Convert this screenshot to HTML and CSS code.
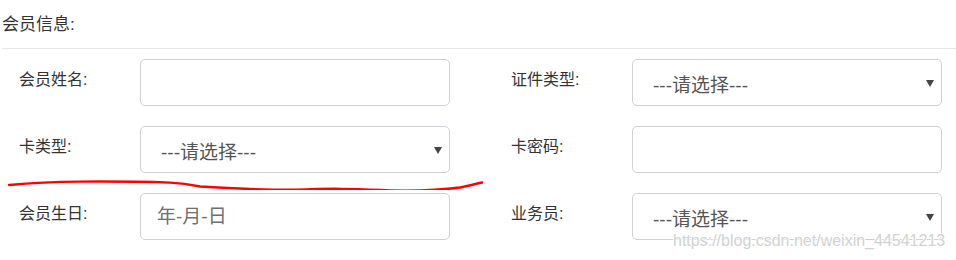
FILE: index.html
```html
<!DOCTYPE html>
<html lang="zh-CN">
<head>
<meta charset="utf-8">
<title>会员信息</title>
<link rel="stylesheet" href="styles.css">
</head>
<body>
<div class="page">
  <div class="section-head">会员信息:</div>
  <form class="form-grid">
    <div class="field">
      <label class="field-label">会员姓名:</label>
      <input class="control" type="text">
    </div>
    <div class="field">
      <label class="field-label">证件类型:</label>
      <div class="select-wrap">
        <select class="control select"><option>---请选择---</option></select>
        <span class="caret"></span>
      </div>
    </div>
    <div class="field">
      <label class="field-label">卡类型:</label>
      <div class="select-wrap">
        <select class="control select"><option>---请选择---</option></select>
        <span class="caret"></span>
      </div>
    </div>
    <div class="field">
      <label class="field-label">卡密码:</label>
      <input class="control" type="password">
    </div>
    <div class="field">
      <label class="field-label">会员生日:</label>
      <input class="control" type="text" placeholder="年-月-日">
    </div>
    <div class="field">
      <label class="field-label">业务员:</label>
      <div class="select-wrap">
        <select class="control select"><option>---请选择---</option></select>
        <span class="caret"></span>
      </div>
    </div>
  </form>
  <svg class="scribble" width="490" height="20" viewBox="0 170 490 20">
    <path d="M9 185 C 30 183, 50 181.8, 80 181.6 C 110 181.4, 140 181.6, 170 182.6 C 182 183.2, 190 184.5, 200 186.5 C 230 188.5, 265 189.6, 293 189.8 C 310 189.5, 320 188.8, 335 188.8 C 360 189.2, 385 190.5, 405 190.6 C 425 190.6, 445 189.5, 460 187.5 C 468 186, 475 184, 482 182.5" fill="none" stroke="#ff0000" stroke-width="2.4" stroke-linecap="round"/>
  </svg>
  <div class="watermark">https://blog.csdn.net/weixin_44541213</div>
</div>
</body>
</html>
```

FILE: styles.css
```css
* { box-sizing: border-box; }
html, body { margin: 0; padding: 0; background: #fff; }
body {
  font-family: "Liberation Sans", "Noto Sans CJK SC", sans-serif;
  color: #333;
}
.page {
  position: relative;
  width: 956px;
  height: 260px;
  overflow: hidden;
}
.section-head {
  margin-left: 2px;
  height: 49px;
  line-height: 50px;
  font-size: 17px;
  color: #333;
  border-bottom: 1px solid #e6e8eb;
}
.form-grid {
  display: grid;
  grid-template-columns: 431px 431px;
  column-gap: 61px;
  row-gap: 20px;
  padding: 10px 0 0 19px;
  margin: 0;
}
.field {
  display: grid;
  grid-template-columns: 121px 310px;
  align-items: center;
}
.field-label {
  font-size: 16px;
  line-height: 20px;
  color: #333;
  padding-bottom: 6px;
}
.control {
  display: block;
  width: 310px;
  height: 47px;
  border: 1px solid #cdd1d6;
  border-radius: 5px;
  background: #fff;
  font-family: "Liberation Sans", "Noto Sans CJK SC", sans-serif;
  font-size: 19px;
  color: #555;
  padding: 0 16px;
  outline: none;
  margin: 0;
}
.control::placeholder { color: #6f6f6f; }
.select-wrap { position: relative; width: 310px; }
.select {
  -webkit-appearance: none;
  appearance: none;
  padding: 5px 20px 0 20px;
  color: #555;
}
.caret {
  position: absolute;
  right: 8px;
  top: 21px;
  width: 0;
  height: 0;
  border-left: 4px solid transparent;
  border-right: 4px solid transparent;
  border-top: 7px solid #444;
}
.scribble {
  position: absolute;
  left: 0;
  top: 170px;
}
.watermark {
  position: absolute;
  left: 673px;
  top: 232px;
  font-family: "Liberation Sans", Arial, sans-serif;
  font-size: 16px;
  line-height: 18px;
  color: #d2d2d2;
  text-shadow: 1px 0 0 #fff, -1px 0 0 #fff, 0 1px 0 #fff, 0 -1px 0 #fff;
  white-space: nowrap;
}
```
